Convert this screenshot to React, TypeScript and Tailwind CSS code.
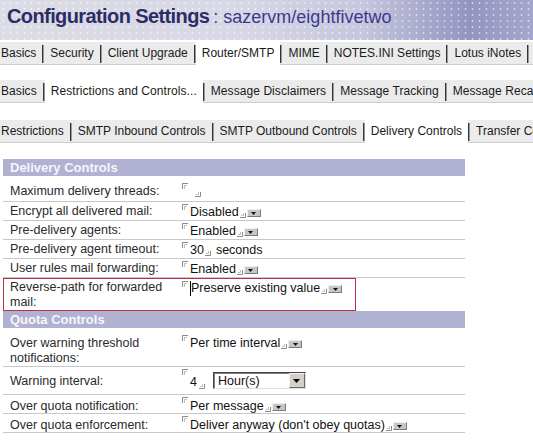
import { Fragment, type ReactNode } from "react";

const tabRows = [
  {
    tabs: ["Basics", "Security", "Client Upgrade", "Router/SMTP", "MIME", "NOTES.INI Settings", "Lotus iNotes", "Advanced"],
    active: 3,
  },
  {
    tabs: ["Basics", "Restrictions and Controls...", "Message Disclaimers", "Message Tracking", "Message Recall"],
    active: 1,
  },
  {
    tabs: ["Restrictions", "SMTP Inbound Controls", "SMTP Outbound Controls", "Delivery Controls", "Transfer Controls"],
    active: 3,
  },
];

function TabStrip({
  tabs,
  active,
  className,
  textClass = "",
}: {
  tabs: string[];
  active: number;
  className: string;
  textClass?: string;
}) {
  return (
    <div className={`w-full overflow-hidden pt-[2px] ${className}`}>
      <div
        className={`flex h-[23px] w-max min-w-full items-stretch whitespace-nowrap border-b border-[#cdcdcd] bg-[#ebebeb] text-[12px] text-[#1a1a1a] ${textClass}`}
      >
        {tabs.map((t, i) => (
          <Fragment key={t}>
            <div
              className={`flex items-center leading-[14px] ${i === 0 ? "pl-[1px] pr-[6px]" : "px-[6px]"} ${
                i === active ? "-mb-[1px] -mt-[2px] bg-white" : ""
              }`}
            >
              {t}
            </div>
            <span className="mt-[3px] h-[18px] w-[2px] shrink-0 self-start border-l border-[#333333] bg-[#9a9a9a]" />
          </Fragment>
        ))}
      </div>
    </div>
  );
}

// notes field delimiters
function OpenMark({ className = "mt-[2px]" }: { className?: string }) {
  return (
    <svg width="6" height="6" viewBox="0 0 6 6" className={`mr-[2px] shrink-0 self-start ${className}`}>
      <path d="M0.5 6V0.5H6" fill="none" stroke="#8a8a8a" />
      <path d="M2.5 6V2.5H5" fill="none" stroke="#bdbdbd" />
    </svg>
  );
}

function CloseMark({ className = "mb-[2px]" }: { className?: string }) {
  return (
    <svg width="6" height="5" viewBox="0 0 6 5" className={`ml-[1px] shrink-0 ${className}`}>
      <path d="M0 4.5H5.5V0" fill="none" stroke="#8a8a8a" />
      <path d="M1 2.5H3.5V0" fill="none" stroke="#bdbdbd" />
    </svg>
  );
}

function DropBtn() {
  return (
    <span className="mb-[3px] ml-[1px] inline-flex h-[8px] w-[14px] shrink-0 items-center justify-center border border-[#efefef] border-b-[#7a7a7a] border-r-[#7a7a7a] bg-[#c6c6c6]">
      <svg width="5" height="3" viewBox="0 0 5 3">
        <path d="M0 0H5L2.5 3Z" fill="#111" />
      </svg>
    </span>
  );
}

function Row({
  label,
  className = "h-[19px]",
  labelClass = "pt-[2px]",
  children,
}: {
  label: string;
  className?: string;
  labelClass?: string;
  children: ReactNode;
}) {
  return (
    <div className={`flex items-start border-b border-[#c8c8c8] ${className}`}>
      <div className={`w-[179px] shrink-0 pl-[7px] pr-[4px] leading-[15px] text-[#2a2a2a] ${labelClass}`}>{label}</div>
      {children}
    </div>
  );
}

function Value({ className = "h-[18px]", children }: { className?: string; children: ReactNode }) {
  return <div className={`flex items-end whitespace-nowrap leading-[15px] text-[#111] ${className}`}>{children}</div>;
}

function Choice({ text, className }: { text: string; className?: string }) {
  return (
    <Value className={className}>
      <OpenMark />
      <span>{text}</span>
      <CloseMark />
      <DropBtn />
    </Value>
  );
}

function SectionHead({ title }: { title: string }) {
  return (
    <div className="flex h-[17px] items-center bg-[#b1b1d1] pl-[7px] text-[13px] font-bold leading-[15px] text-[#f6f6fb]">
      {title}
    </div>
  );
}

export default function App() {
  return (
    <div className="h-[448px] w-[533px] overflow-hidden bg-white font-['Liberation_Sans',Arial,sans-serif] text-[12.5px]">
      {/* banner */}
      <div className="h-[40px] bg-[linear-gradient(90deg,#dcdce6_0%,#d7d7e6_45%,#c6c6de_68%,#9494c0_88%,#a6a6cc_100%)]">
        <div className="flex h-full items-baseline whitespace-nowrap bg-[radial-gradient(rgba(255,255,255,0.55)_0.7px,transparent_1.3px)] bg-[length:7px_6px] pl-[7px] pt-[4px] leading-[24px]">
          <span className="text-[20px] font-bold tracking-[-0.6px] text-[#2c2c66]">Configuration Settings</span>
          <span className="ml-[4px] text-[18px] text-[#3a3a8c]">: sazervm/eightfivetwo</span>
        </div>
      </div>

      <TabStrip tabs={tabRows[0].tabs} active={tabRows[0].active} className="" />
      <TabStrip
        tabs={tabRows[1].tabs}
        active={tabRows[1].active}
        className="mt-[13px]"
        textClass="tracking-[0.07px]"
      />
      <TabStrip tabs={tabRows[2].tabs} active={tabRows[2].active} className="mt-[15px]" />

      <div className="ml-[3px] mt-[16px] w-[462px]">
        <SectionHead title="Delivery Controls" />
        <div className="pt-[7px]">
          <Row label="Maximum delivery threads:" labelClass="pt-[1px]">
            <Value className="h-[16px]">
              <OpenMark className="mt-0" />
              <span className="w-[4px]">&nbsp;</span>
              <CloseMark />
            </Value>
          </Row>
          <Row label="Encrypt all delivered mail:">
            <Choice text="Disabled" />
          </Row>
          <Row label="Pre-delivery agents:">
            <Choice text="Enabled" />
          </Row>
          <Row label="Pre-delivery agent timeout:">
            <Value>
              <OpenMark />
              <span>30</span>
              <CloseMark />
              <span className="ml-[5px]">seconds</span>
            </Value>
          </Row>
          <Row label="User rules mail forwarding:">
            <Choice text="Enabled" />
          </Row>
          <div className="flex h-[33px] w-[353px] items-start border border-[#b8304a]">
            <div className="w-[178px] shrink-0 pl-[6px] pr-[4px] pt-[1px] leading-[15px] text-[#2a2a2a]">
              Reverse-path for forwarded mail:
            </div>
            <Value className="h-[17px]">
              <OpenMark />
              <span className="h-[15px] w-[1px] shrink-0 bg-black" />
              <span>Preserve existing value</span>
              <CloseMark />
              <DropBtn />
            </Value>
          </div>
        </div>

        <SectionHead title="Quota Controls" />
        <div className="pt-[6px]">
          <Row label="Over warning threshold notifications:" className="h-[33px]" labelClass="pt-[2px]">
            <Value className="h-[17px]">
              <OpenMark className="mt-[1px]" />
              <span>Per time interval</span>
              <CloseMark />
              <DropBtn />
            </Value>
          </Row>
          <Row label="Warning interval:" className="h-[28px]" labelClass="pt-[7px]">
            <div className="flex h-[27px] items-center whitespace-nowrap leading-[15px] text-[#111]">
              <OpenMark />
              <span className="mt-[4px]">4</span>
              <CloseMark className="mb-[5px] ml-[2px] self-end" />
              <div className="ml-[8px] flex h-[17px] w-[93px] items-stretch border border-[#404040] border-b-[#e0e0e0] border-r-[#e0e0e0] bg-white">
                <div className="flex flex-1 items-center border-l border-t border-[#808080] pl-[3px]">Hour(s)</div>
                <div className="flex w-[16px] items-center justify-center border border-[#f4f4f4] border-b-[#6a6a6a] border-r-[#6a6a6a] bg-[#d4d0c8]">
                  <svg width="7" height="4" viewBox="0 0 7 4">
                    <path d="M0 0H7L3.5 4Z" fill="#000" />
                  </svg>
                </div>
              </div>
            </div>
          </Row>
          <Row label="Over quota notification:" labelClass="pt-[4px]">
            <Choice text="Per message" className="h-[19px]" />
          </Row>
          <Row label="Over quota enforcement:" labelClass="pt-[4px]">
            <Choice text="Deliver anyway (don't obey quotas)" className="h-[19px]" />
          </Row>
        </div>
      </div>
    </div>
  );
}
